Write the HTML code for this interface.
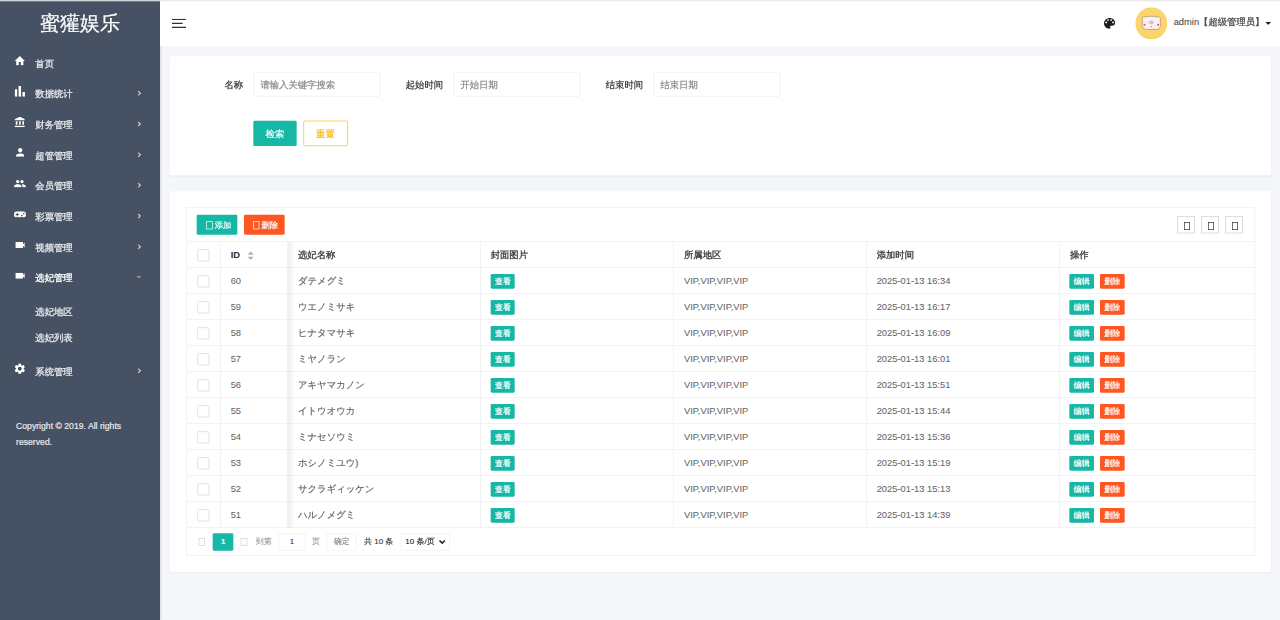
<!DOCTYPE html>
<html lang="zh-CN">
<head>
<meta charset="utf-8">
<title>蜜獾娱乐</title>
<style>
*{box-sizing:border-box;margin:0;padding:0}
html,body{width:1280px;height:620px;overflow:hidden;background:#f5f6fa}
body{font-family:"Liberation Sans","WenQuanYi Zen Hei",sans-serif;font-size:14px;color:#333;line-height:1}
#stage{-webkit-text-stroke:0.3px;position:absolute;left:0;top:0;width:1920px;height:930px;transform:scale(0.6666667);transform-origin:0 0;background:#f5f6fa;overflow:hidden}
.abs{position:absolute}
/* top strip */
#strip{position:absolute;left:0;top:0;width:1920px;height:1.5px;background:linear-gradient(to right,#d0d3d8 0,#d0d3d8 240px,#ebebec 240px,#ebebec 100%);z-index:10}
/* sidebar */
#side{position:absolute;left:0;top:0;width:240px;height:930px;background:#465163;color:#e4e6ea;box-shadow:1px 0 3px rgba(0,0,0,.12)}
#logo{position:absolute;left:0;top:1px;width:240px;height:68px;line-height:68.800px;text-align:center;font-size:30px;color:#fff}
.mi{position:absolute;left:0;width:240px;height:46px}
.mi .t{position:absolute;left:53px;top:0;line-height:47px;font-size:14px;white-space:nowrap;-webkit-text-stroke:0.45px}
.mi svg.ic{position:absolute;fill:#fff}
.mi .ar{position:absolute;left:205.500px;top:18px;width:6px;height:8px}
.sub{position:absolute;left:53px;font-size:14px;white-space:nowrap;color:#e4e6ea;-webkit-text-stroke:0.45px}
#copy{position:absolute;left:24px;top:627px;width:210px;font-size:13px;-webkit-text-stroke:0.3px;line-height:24px;color:#e8eaee}
/* header */
#head{position:absolute;left:240px;top:1.5px;width:1680px;height:67.5px;background:#fff}
/* cards */
.card{position:absolute;background:#fff;border-radius:2px;box-shadow:0 1px 2px rgba(0,0,0,.035)}
.lbl{position:absolute;width:110px;padding-right:15px;text-align:right;line-height:38px;top:108px;color:#333}
.inp{position:absolute;top:108px;width:190px;height:37px;border:1px solid #ececec;border-radius:2px;background:#fff;line-height:36.700px;padding-left:10px;color:#8a8a8a;font-size:14px}
.btn{position:absolute;height:38px;line-height:39.500px;text-align:center;border-radius:2px;color:#fff;font-size:14px}
.g{background:#16b7a5}
.r{background:#ff5722}

/* table */
#tv{position:absolute;left:23.700px;top:24.5px;width:1604.5px;height:523px;border:1px solid #eee;background:#fff}
#tool{position:relative;height:51px;border-bottom:1px solid #eee}
.bs{position:absolute;top:10px;height:29.500px;width:60.700px;border-radius:2px;color:#fff;font-size:12.400px;line-height:32.800px}
.bs i{position:absolute;left:14.100px;top:9.800px;width:9.500px;height:12.500px;border:1.500px solid #fff}
.bs span{position:absolute;left:26.800px;top:0}
.tb{position:absolute;top:12px;width:26px;height:26px;border:1px solid #ccc;background:#fff}
.tb i{position:absolute;left:8.300px;top:7.600px;width:9px;height:12px;border:1.500px solid #2b2b33}
.row{position:relative;height:39px;border-bottom:1px solid #eee;white-space:nowrap}
.row>div{position:absolute;top:0;height:38px;line-height:39.200px;border-right:1px solid #eee;padding-left:15px;color:#666;font-size:14px;overflow:hidden}
.row>div:last-child{border-right:0}
.row.h>div{color:#333;font-weight:bold;-webkit-text-stroke:0.4px}
.row>div.lt,.row.h>div.lt{-webkit-text-stroke:0.1px}
.k0{left:0;width:51px}.k1{left:51px;width:101px}.k2{left:152px;width:289px}.k3{left:441px;width:290px}.k4{left:731px;width:289px}.k5{left:1020px;width:290px}.k6{left:1310px;width:292.500px}
.cb{position:absolute;left:16px;top:10.500px;width:18px;height:18.500px;border:1px solid #d2d2d2;border-radius:2px;background:#fff}
.xs{position:absolute;top:9.200px;height:22.200px;line-height:22.400px;width:36.300px;text-align:center;font-size:12px;color:#fff;border-radius:2px;font-weight:bold}
.sort{position:absolute;left:39.700px;top:13.500px;width:10px;height:13px}
.shl{position:absolute;left:152px;top:51px;width:11px;height:429px;background:linear-gradient(to right,rgba(0,0,0,.065),rgba(0,0,0,0));pointer-events:none}
.shr{position:absolute;left:1301px;top:51px;width:8px;height:429px;background:linear-gradient(to left,rgba(0,0,0,.07),rgba(0,0,0,0));pointer-events:none}
#pg{position:absolute;left:1px;top:479px;width:1601.500px;height:40px;font-size:12px;color:#333;-webkit-text-stroke:0.15px}
#pg>*{position:absolute}
.tf{width:9.500px;height:12px;border:1px solid #d2d2d2;top:15.500px}
</style>
</head>
<body>
<div id="stage">
<div id="strip"></div>
<div id="side">
  <div id="logo">蜜獾娱乐</div>
  <div id="menu">
<div class="mi" style="top:71.7px"><svg class="ic" viewBox="2 3 20 17" preserveAspectRatio="none" style="left:22.3px;top:12.3px;width:15.4px;height:14.1px"><path d="M10 20v-6h4v6h5v-8h3L12 3 2 12h3v8z"/></svg><span class="t" style="color:#e4e6ea">首页</span></div>
<div class="mi" style="top:117.7px"><svg class="ic" viewBox="5 5 14 14" preserveAspectRatio="none" style="left:22.3px;top:11.6px;width:15.4px;height:16.0px"><path d="M5 9.2h3.4V19H5zM10.3 5h3.4v14h-3.4zM15.6 13H19v6h-3.4z"/></svg><span class="t" style="color:#e4e6ea">数据统计</span><svg class="ar" viewBox="0 0 6 8"><path d="M1.200 0.800L4.500 4 1.200 7.200" fill="none" stroke="#cdd1d8" stroke-width="1.700"/></svg></div>
<div class="mi" style="top:163.7px"><svg class="ic" viewBox="2 1 19 21" preserveAspectRatio="none" style="left:21.7px;top:11.8px;width:15.7px;height:16.0px"><path d="M4 10v7h3v-7H4zm6 0v7h3v-7h-3zM2 22h19v-3H2v3zm14-12v7h3v-7h-3zm-4.500-9L2 6v2h19V6l-9.500-5z"/></svg><span class="t" style="color:#e4e6ea">财务管理</span><svg class="ar" viewBox="0 0 6 8"><path d="M1.200 0.800L4.500 4 1.200 7.200" fill="none" stroke="#cdd1d8" stroke-width="1.700"/></svg></div>
<div class="mi" style="top:209.7px"><svg class="ic" viewBox="4 4 16 16" preserveAspectRatio="none" style="left:23.6px;top:12.6px;width:12.6px;height:13.2px"><path d="M12 12c2.210 0 4-1.790 4-4s-1.790-4-4-4-4 1.790-4 4 1.790 4 4 4zm0 2c-2.670 0-8 1.340-8 4v2h16v-2c0-2.660-5.330-4-8-4z"/></svg><span class="t" style="color:#e4e6ea">超管管理</span><svg class="ar" viewBox="0 0 6 8"><path d="M1.200 0.800L4.500 4 1.200 7.200" fill="none" stroke="#cdd1d8" stroke-width="1.700"/></svg></div>
<div class="mi" style="top:255.7px"><svg class="ic" viewBox="1 5 22 14" preserveAspectRatio="none" style="left:21.1px;top:14.3px;width:17.6px;height:11.3px"><path d="M16 11c1.660 0 2.990-1.340 2.990-3S17.660 5 16 5c-1.660 0-3 1.340-3 3s1.340 3 3 3zm-8 0c1.660 0 2.990-1.340 2.990-3S9.660 5 8 5C6.340 5 5 6.340 5 8s1.340 3 3 3zm0 2c-2.330 0-7 1.170-7 3.500V19h14v-2.500c0-2.330-4.670-3.500-7-3.500zm8 0c-.29 0-.62.020-.97.050 1.160.84 1.970 1.970 1.970 3.450V19h6v-2.500c0-2.330-4.670-3.500-7-3.500z"/></svg><span class="t" style="color:#e4e6ea">会员管理</span><svg class="ar" viewBox="0 0 6 8"><path d="M1.200 0.800L4.500 4 1.200 7.200" fill="none" stroke="#cdd1d8" stroke-width="1.700"/></svg></div>
<div class="mi" style="top:301.7px"><svg class="ic" viewBox="1 6 22 12" preserveAspectRatio="none" style="left:20.8px;top:14.9px;width:17.9px;height:9.8px"><path fill-rule="evenodd" d="M7 6h10a6 6 0 0 1 0 12H7A6 6 0 0 1 7 6zm-.9 3v2.100H4v1.800h2.100V15h1.800v-2.100H10v-1.800H7.900V9H6.100zm9.400 3.500a1.500 1.500 0 1 0 0 3 1.500 1.500 0 0 0 0-3zm3.500-3.500a1.500 1.500 0 1 0 0 3 1.500 1.500 0 0 0 0-3z"/></svg><span class="t" style="color:#e4e6ea">彩票管理</span><svg class="ar" viewBox="0 0 6 8"><path d="M1.200 0.800L4.500 4 1.200 7.200" fill="none" stroke="#cdd1d8" stroke-width="1.700"/></svg></div>
<div class="mi" style="top:347.7px"><svg class="ic" viewBox="3 6 18 12" preserveAspectRatio="none" style="left:22.6px;top:15.5px;width:14.8px;height:9.1px"><path d="M17 10.500V7c0-.55-.45-1-1-1H4c-.55 0-1 .45-1 1v10c0 .55.45 1 1 1h12c.55 0 1-.45 1-1v-3.500l4 4v-11l-4 4z"/></svg><span class="t" style="color:#e4e6ea">视频管理</span><svg class="ar" viewBox="0 0 6 8"><path d="M1.200 0.800L4.500 4 1.200 7.200" fill="none" stroke="#cdd1d8" stroke-width="1.700"/></svg></div>
<div class="mi" style="top:393.7px"><svg class="ic" viewBox="3 6 18 12" preserveAspectRatio="none" style="left:22.6px;top:15.5px;width:14.8px;height:9.1px"><path d="M17 10.500V7c0-.55-.45-1-1-1H4c-.55 0-1 .45-1 1v10c0 .55.45 1 1 1h12c.55 0 1-.45 1-1v-3.500l4 4v-11l-4 4z"/></svg><span class="t" style="color:#fff">选妃管理</span><svg class="ar" viewBox="0 0 8 6" style="left:205px;top:19.300px;width:6.500px;height:4.500px"><path d="M0.800 1L4 4.600 7.200 1" fill="none" stroke="#cdd1d8" stroke-width="2"/></svg></div>
<div class="sub" style="top:460.700px">选妃地区</div>
<div class="sub" style="top:498.700px">选妃列表</div>
<div class="mi" style="top:534.4px"><svg class="ic" viewBox="2.5 2 19.0 20" preserveAspectRatio="none" style="left:22.3px;top:10.6px;width:15.4px;height:16.1px"><path d="M19.140 12.940c.040-.3.060-.61.060-.94 0-.32-.020-.64-.070-.94l2.030-1.580c.18-.14.23-.41.120-.61l-1.920-3.320c-.12-.22-.37-.29-.59-.22l-2.390.96c-.5-.38-1.030-.7-1.620-.94l-.36-2.540c-.040-.24-.24-.41-.48-.41h-3.840c-.24 0-.43.17-.47.41l-.36 2.540c-.59.24-1.130.57-1.620.94l-2.390-.96c-.22-.080-.47 0-.59.22L2.740 8.870c-.12.21-.080.47.12.61l2.030 1.580c-.050.3-.090.63-.090.94s.020.64.070.94l-2.030 1.580c-.18.14-.23.41-.12.61l1.920 3.320c.12.22.37.29.59.22l2.390-.96c.5.38 1.030.7 1.620.94l.36 2.540c.050.24.24.41.48.41h3.840c.24 0 .44-.17.47-.41l.36-2.540c.59-.24 1.130-.56 1.620-.94l2.390.96c.22.080.47 0 .59-.22l1.920-3.320c.12-.22.070-.47-.12-.61l-2.010-1.580zM12 15.600c-1.980 0-3.600-1.620-3.600-3.600s1.620-3.600 3.600-3.600 3.600 1.620 3.600 3.600-1.620 3.600-3.600 3.600z"/></svg><span class="t">系统管理</span><svg class="ar" viewBox="0 0 6 8"><path d="M1.200 0.800L4.500 4 1.200 7.200" fill="none" stroke="#cdd1d8" stroke-width="1.700"/></svg></div>
</div>
  <div id="copy">Copyright © 2019. All rights reserved.</div>
</div>
<div id="head">
  <svg class="abs" style="left:18px;top:26.5px;width:21px;height:14px" viewBox="0 0 21 14"><path d="M0 1h21M0 7h16M0 13h21" stroke="#2f3338" stroke-width="1.900" fill="none"/></svg>
  <svg class="abs" style="left:1416.300px;top:25.500px;width:16.800px;height:16.300px" viewBox="3 3 18 18" preserveAspectRatio="none"><path fill="#1f1f1f" d="M12 3c-4.970 0-9 4.030-9 9s4.030 9 9 9c.83 0 1.500-.67 1.500-1.500 0-.39-.15-.74-.39-1.010-.23-.26-.38-.61-.38-.99 0-.83.67-1.500 1.500-1.500H16c2.760 0 5-2.240 5-5 0-4.420-4.030-8-9-8zm-5.500 9c-.83 0-1.500-.67-1.500-1.500S5.670 9 6.500 9 8 9.670 8 10.500 7.330 12 6.500 12zm3-4C8.670 8 8 7.330 8 6.500S8.670 5 9.500 5s1.500.67 1.500 1.500S10.330 8 9.500 8zm5 0c-.83 0-1.500-.67-1.500-1.500S13.670 5 14.500 5s1.500.67 1.500 1.500S15.330 8 14.500 8zm3 4c-.83 0-1.500-.67-1.500-1.500S16.670 9 17.500 9s1.500.67 1.500 1.500-.67 1.500-1.500 1.500z"/></svg>
  <svg class="abs" style="left:1463px;top:9.500px;width:48px;height:48px" viewBox="0 0 48 48">
    <circle cx="24" cy="24" r="24" fill="#fbd56b"/>
    <path d="M10.500 17c0-2.200 1.300-3.300 3.300-2.500 6.800-1.500 13.600-1.500 20.400 0 2-.8 3.300.3 3.300 2.500v10.500c0 3.600-2.600 5.700-6.200 5.700H16.700c-3.600 0-6.200-2.100-6.200-5.700z" fill="#fbeeee" stroke="#8d8585" stroke-width=".9"/>
    <circle cx="13.800" cy="26.300" r="1.500" fill="#f4502f"/><circle cx="34.200" cy="26.300" r="1.500" fill="#f4502f"/>
    <rect x="21.300" y="21" width="5.400" height="3.400" rx="1.200" fill="#f3c4c4" stroke="#b98a8a" stroke-width=".7"/>
    <circle cx="24" cy="28.800" r=".9" fill="#8a6a6a"/>
  </svg>
  <div class="abs" id="uname" style="-webkit-text-stroke:0.12px;left:1520.500px;top:16.800px;line-height:28px;font-size:14px;color:#4a4a4a;white-space:nowrap">admin<span style="-webkit-text-stroke:0.4px">【超级管理员】</span></div>
  <svg class="abs" style="left:1658.300px;top:31.300px;width:8.700px;height:4.500px" viewBox="0 0 8 4"><path d="M0 0h8L4 4z" fill="#222"/></svg>
</div>
<div class="card" id="c1" style="left:255.300px;top:84px;width:1651.400px;height:179px">
  <div class="lbl" style="left:14.300px;top:24px">名称</div>
  <div class="inp" style="left:124.300px;top:24px">请输入关键字搜索</div>
  <div class="lbl" style="left:314.300px;top:24px">起始时间</div>
  <div class="inp" style="left:424.300px;top:24px">开始日期</div>
  <div class="lbl" style="left:614.300px;top:24px">结束时间</div>
  <div class="inp" style="left:724.300px;top:24px">结束日期</div>
  <div class="btn g" style="left:124.300px;top:97px;width:65.500px">检索</div>
  <div class="btn" style="left:199.300px;top:97px;width:67px;background:#fff;border:1px solid #ffb800;color:#ffb800;line-height:37.500px;font-weight:bold">重置</div>
</div>
<div class="card" id="c2" style="left:255.300px;top:286.5px;width:1651.400px;height:571.5px">
<div id="tv">
<div id="tool"><div class="bs g" style="left:15.400px"><i></i><span>添加</span></div><div class="bs r" style="left:85.600px;width:61.600px"><i></i><span>删除</span></div><div class="tb" style="left:1486.500px"><i></i></div><div class="tb" style="left:1522.500px"><i></i></div><div class="tb" style="left:1558.500px"><i></i></div></div>
<div class="row h"><div class="k0"><span class="cb"></span></div><div class="k1 lt">ID<svg class="sort" viewBox="0 0 10 13"><path d="M5 0L9.500 5H.5z" fill="#b2b2b2"/><path d="M5 13L9.500 8H.5z" fill="#b2b2b2"/></svg></div><div class="k2">选妃名称</div><div class="k3">封面图片</div><div class="k4">所属地区</div><div class="k5">添加时间</div><div class="k6">操作</div></div>
<div class="row"><div class="k0"><span class="cb"></span></div><div class="k1 lt">60</div><div class="k2">ダテメグミ</div><div class="k3"><span class="xs g" style="left:15.200px">查看</span></div><div class="k4 lt">VIP,VIP,VIP,VIP</div><div class="k5 lt">2025-01-13 16:34</div><div class="k6"><span class="xs g" style="left:14.500px">编辑</span><span class="xs r" style="left:60.300px">删除</span></div></div>
<div class="row"><div class="k0"><span class="cb"></span></div><div class="k1 lt">59</div><div class="k2">ウエノミサキ</div><div class="k3"><span class="xs g" style="left:15.200px">查看</span></div><div class="k4 lt">VIP,VIP,VIP,VIP</div><div class="k5 lt">2025-01-13 16:17</div><div class="k6"><span class="xs g" style="left:14.500px">编辑</span><span class="xs r" style="left:60.300px">删除</span></div></div>
<div class="row"><div class="k0"><span class="cb"></span></div><div class="k1 lt">58</div><div class="k2">ヒナタマサキ</div><div class="k3"><span class="xs g" style="left:15.200px">查看</span></div><div class="k4 lt">VIP,VIP,VIP,VIP</div><div class="k5 lt">2025-01-13 16:09</div><div class="k6"><span class="xs g" style="left:14.500px">编辑</span><span class="xs r" style="left:60.300px">删除</span></div></div>
<div class="row"><div class="k0"><span class="cb"></span></div><div class="k1 lt">57</div><div class="k2">ミヤノラン</div><div class="k3"><span class="xs g" style="left:15.200px">查看</span></div><div class="k4 lt">VIP,VIP,VIP,VIP</div><div class="k5 lt">2025-01-13 16:01</div><div class="k6"><span class="xs g" style="left:14.500px">编辑</span><span class="xs r" style="left:60.300px">删除</span></div></div>
<div class="row"><div class="k0"><span class="cb"></span></div><div class="k1 lt">56</div><div class="k2">アキヤマカノン</div><div class="k3"><span class="xs g" style="left:15.200px">查看</span></div><div class="k4 lt">VIP,VIP,VIP,VIP</div><div class="k5 lt">2025-01-13 15:51</div><div class="k6"><span class="xs g" style="left:14.500px">编辑</span><span class="xs r" style="left:60.300px">删除</span></div></div>
<div class="row"><div class="k0"><span class="cb"></span></div><div class="k1 lt">55</div><div class="k2">イトウオウカ</div><div class="k3"><span class="xs g" style="left:15.200px">查看</span></div><div class="k4 lt">VIP,VIP,VIP,VIP</div><div class="k5 lt">2025-01-13 15:44</div><div class="k6"><span class="xs g" style="left:14.500px">编辑</span><span class="xs r" style="left:60.300px">删除</span></div></div>
<div class="row"><div class="k0"><span class="cb"></span></div><div class="k1 lt">54</div><div class="k2">ミナセソウミ</div><div class="k3"><span class="xs g" style="left:15.200px">查看</span></div><div class="k4 lt">VIP,VIP,VIP,VIP</div><div class="k5 lt">2025-01-13 15:36</div><div class="k6"><span class="xs g" style="left:14.500px">编辑</span><span class="xs r" style="left:60.300px">删除</span></div></div>
<div class="row"><div class="k0"><span class="cb"></span></div><div class="k1 lt">53</div><div class="k2">ホシノミユウ)</div><div class="k3"><span class="xs g" style="left:15.200px">查看</span></div><div class="k4 lt">VIP,VIP,VIP,VIP</div><div class="k5 lt">2025-01-13 15:19</div><div class="k6"><span class="xs g" style="left:14.500px">编辑</span><span class="xs r" style="left:60.300px">删除</span></div></div>
<div class="row"><div class="k0"><span class="cb"></span></div><div class="k1 lt">52</div><div class="k2">サクラギィッケン</div><div class="k3"><span class="xs g" style="left:15.200px">查看</span></div><div class="k4 lt">VIP,VIP,VIP,VIP</div><div class="k5 lt">2025-01-13 15:13</div><div class="k6"><span class="xs g" style="left:14.500px">编辑</span><span class="xs r" style="left:60.300px">删除</span></div></div>
<div class="row"><div class="k0"><span class="cb"></span></div><div class="k1 lt">51</div><div class="k2">ハルノメグミ</div><div class="k3"><span class="xs g" style="left:15.200px">查看</span></div><div class="k4 lt">VIP,VIP,VIP,VIP</div><div class="k5 lt">2025-01-13 14:39</div><div class="k6"><span class="xs g" style="left:14.500px">编辑</span><span class="xs r" style="left:60.300px">删除</span></div></div>
<div class="shl"></div>
<div id="pg"><i class="tf" style="left:17px"></i><span class="g" style="left:38.500px;top:9px;width:31px;height:26px;line-height:24.400px;text-align:center;color:#fff;border-radius:2px;font-weight:bold">1</span><i class="tf" style="left:80.500px"></i><span style="left:102.500px;top:9px;line-height:24.400px;color:#999">到第</span><span style="left:137px;top:9px;width:40px;height:26px;line-height:22.400px;text-align:center;border:1px solid #eee;border-radius:2px;color:#333">1</span><span style="left:187px;top:9px;line-height:24.400px;color:#999">页</span><span style="left:209px;top:9px;width:45px;height:26px;line-height:22.400px;text-align:center;border:1px solid #eee;border-radius:2px;color:#888">确定</span><span style="left:265px;top:9px;line-height:24.400px;color:#333">共 10 条</span><span style="left:320px;top:9px;width:74px;height:26px;line-height:22.400px;border:1px solid #eee;border-radius:2px;padding-left:6px;color:#222">10 条/页<svg style="position:absolute;left:56.500px;top:8.300px;width:10.500px;height:8px" viewBox="0 0 9 7"><path d="M1 1.500L4.500 5 8 1.500" fill="none" stroke="#222" stroke-width="2"/></svg></span></div>
</div>
</div>
</div>
</body>
</html>
